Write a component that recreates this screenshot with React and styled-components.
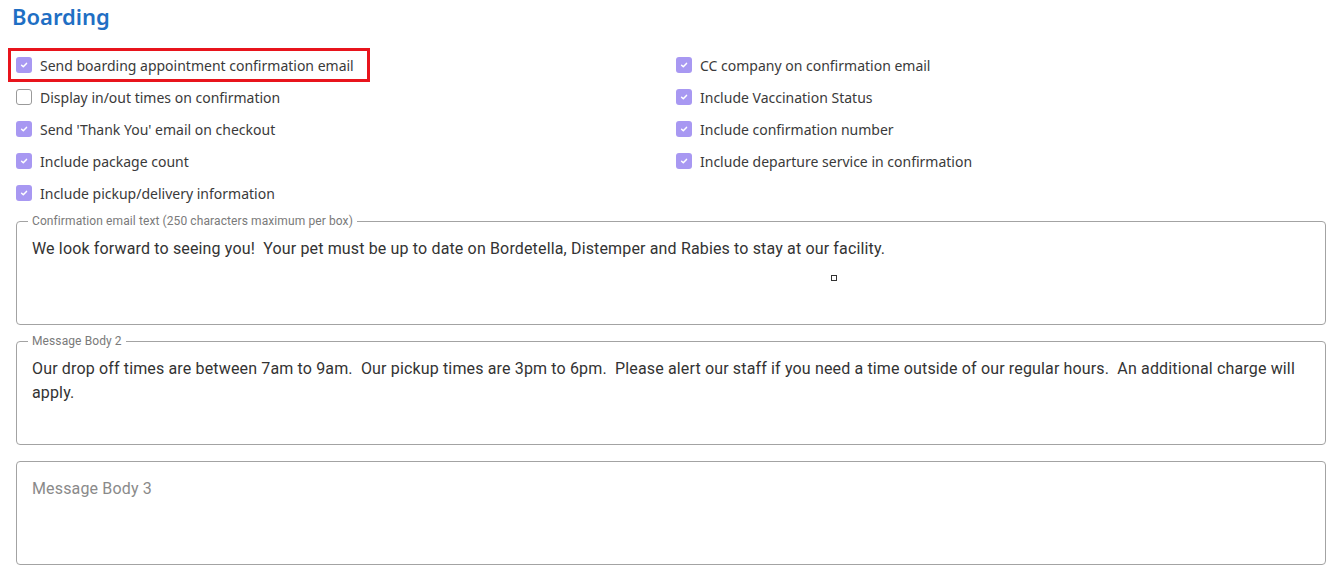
import React from "react";
import styled, { createGlobalStyle } from "styled-components";

const Global = createGlobalStyle`
  html, body { margin: 0; padding: 0; background: #fff; }
  body { font-family: "Noto Sans", "Open Sans", sans-serif; }
  * { box-sizing: border-box; }
`;

const Page = styled.div`
  width: 1330px;
  height: 572px;
  overflow: hidden;
  padding-top: 1px;
`;

const Title = styled.h1`
  margin: 0 0 0 12px;
  font-family: "Noto Sans", "Open Sans", sans-serif;
  font-size: 22px;
  line-height: 30px;
  font-weight: 600;
  color: #1f6fc4;
`;

const OptionsGrid = styled.div`
  display: grid;
  grid-template-columns: 660px 1fr;
  padding-left: 9px;
  margin-top: 18px;
`;

const Column = styled.div`
  display: flex;
  flex-direction: column;
  align-items: flex-start;
`;

const Option = styled.label`
  display: inline-flex;
  align-items: center;
  gap: 8px;
  height: 32px;
  padding: 0 15px 0 7px;
  font-size: 14px;
  color: #3a3a3a;
  cursor: pointer;
  box-shadow: ${(p) =>
    p.$highlight ? "inset 0 0 0 2px #e8141c, 0 0 0 1px #e8141c" : "none"};
`;

const Box = styled.span`
  width: 16px;
  height: 16px;
  border-radius: 3px;
  flex: none;
  display: flex;
  align-items: center;
  justify-content: center;
  background: ${(p) => (p.$checked ? "#a898f2" : "#fff")};
  border: ${(p) => (p.$checked ? "none" : "1px solid #9a9a9a")};
`;

const Fields = styled.div`
  display: flex;
  flex-direction: column;
  gap: 16px;
  margin: 12px 4px 0 16px;
`;

const Field = styled.div`
  position: relative;
  height: 104px;
  border: 1px solid #a3a3a3;
  border-radius: 4px;
`;

const FloatLabel = styled.span`
  position: absolute;
  top: -8px;
  left: 11px;
  padding: 0 4px;
  background: #fff;
  font-family: Roboto, sans-serif;
  font-size: 12px;
  line-height: 14px;
  letter-spacing: 0.1px;
  color: #7a7a7a;
`;

const Area = styled.textarea`
  display: block;
  width: 100%;
  height: 100%;
  border: none;
  outline: none;
  resize: none;
  background: transparent;
  padding: 15px 15px 13px;
  font-family: Roboto, sans-serif;
  font-size: 16px;
  line-height: 24px;
  letter-spacing: 0.15px;
  color: #333;
  &::placeholder { color: #8a8a8a; }
`;

const Marker = styled.span`
  position: absolute;
  left: 814px;
  top: 53px;
  width: 6px;
  height: 6px;
  border: 1.5px solid #333;
  background: #fff;
`;

const Check = () => (
  <svg width="10" height="10" viewBox="0 0 10 10">
    <path d="M2.6 5.2 L4.3 6.8 L7.5 3.4" fill="none" stroke="#fff" strokeWidth="1.5" strokeLinecap="round" strokeLinejoin="round" />
  </svg>
);

const Item = ({ checked, highlight, children }) => (
  <Option $highlight={highlight}>
    <Box $checked={checked}>{checked && <Check />}</Box>
    {children}
  </Option>
);

const left = [
  ["Send boarding appointment confirmation email", true, true],
  ["Display in/out times on confirmation", false],
  ["Send 'Thank You' email on checkout", true],
  ["Include package count", true],
  ["Include pickup/delivery information", true],
];
const right = [
  ["CC company on confirmation email", true],
  ["Include Vaccination Status", true],
  ["Include confirmation number", true],
  ["Include departure service in confirmation", true],
];

export default function App() {
  return (
    <Page>
      <Global />
      <Title>Boarding</Title>
      <OptionsGrid>
        <Column>
          {left.map(([t, c, h]) => (
            <Item key={t} checked={c} highlight={h}>{t}</Item>
          ))}
        </Column>
        <Column>
          {right.map(([t, c]) => (
            <Item key={t} checked={c}>{t}</Item>
          ))}
        </Column>
      </OptionsGrid>
      <Fields>
        <Field>
          <FloatLabel>Confirmation email text (250 characters maximum per box)</FloatLabel>
          <Area defaultValue="We look forward to seeing you!  Your pet must be up to date on Bordetella, Distemper and Rabies to stay at our facility." />
          <Marker />
        </Field>
        <Field>
          <FloatLabel>Message Body 2</FloatLabel>
          <Area defaultValue="Our drop off times are between 7am to 9am.  Our pickup times are 3pm to 6pm.  Please alert our staff if you need a time outside of our regular hours.  An additional charge will apply." />
        </Field>
        <Field>
          <Area placeholder="Message Body 3" />
        </Field>
      </Fields>
    </Page>
  );
}
